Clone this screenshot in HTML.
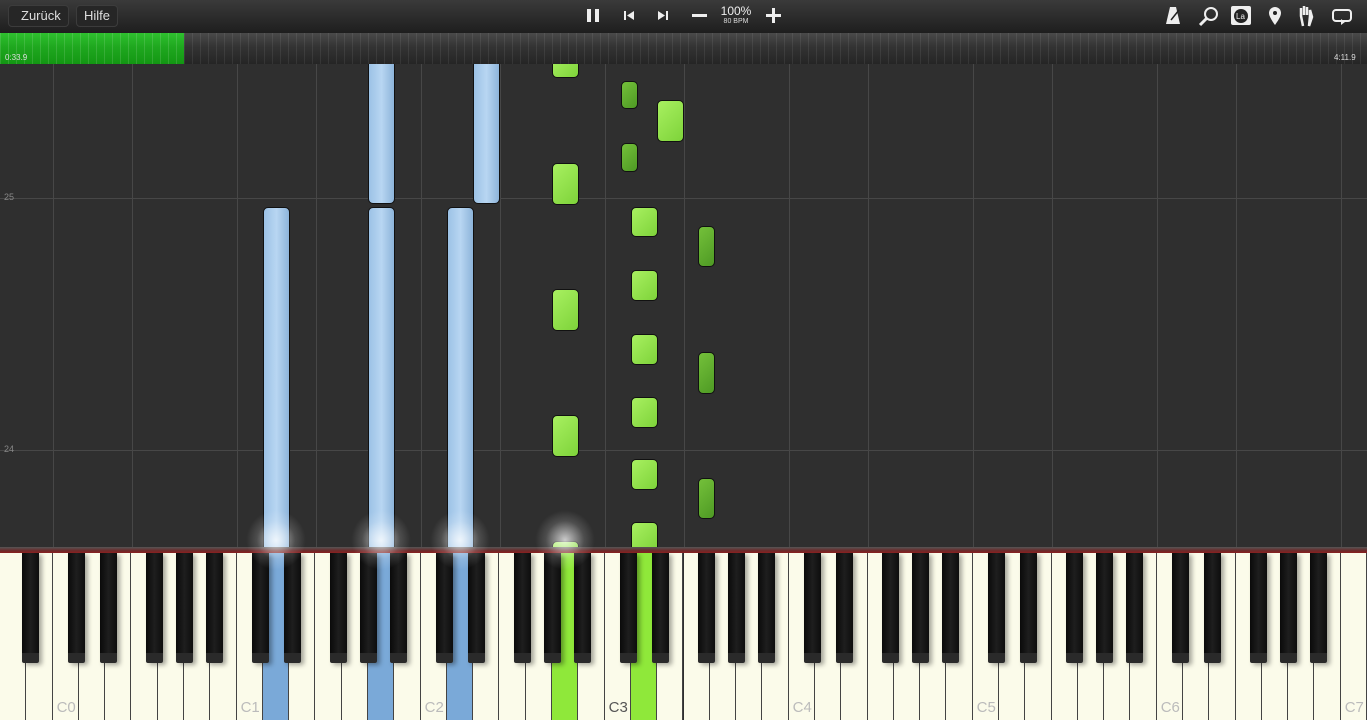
<!DOCTYPE html>
<html><head><meta charset="utf-8"><style>
*{margin:0;padding:0;box-sizing:border-box}
body{width:1367px;height:720px;overflow:hidden;background:#2f2f2f;font-family:"Liberation Sans",sans-serif;position:relative}
.top{position:absolute;left:0;top:0;width:1367px;height:33px;background:linear-gradient(#3a3a3a,#1e1e1e);}
.btn{position:absolute;top:5px;height:22px;border-radius:4px;background:#262626;border:1px solid #3c3c3c;color:#ddd;font-size:13px;line-height:20px;padding:0 7px}
.prog{position:absolute;left:0;top:33px;width:1367px;height:31px;
background-image:repeating-linear-gradient(90deg,rgba(255,255,255,.07) 0 1px,transparent 1px 8px),linear-gradient(#4a4a4a,#333 45%,#252525)}
.green{position:absolute;left:0;top:33px;width:184px;height:31px;background-image:repeating-linear-gradient(90deg,rgba(255,255,255,.12) 0 1px,transparent 1px 8px),linear-gradient(#2fc02f,#1fa81f 45%,#139613)}
.t{position:absolute;font-size:8px;color:#ddd;top:53px}
.roll{position:absolute;left:0;top:64px;width:1367px;height:487px;background:#2f2f2f;overflow:hidden}
.vl{position:absolute;top:0;width:1px;height:487px;background:#474747}
.hl{position:absolute;left:0;width:1367px;height:1px;background:#474747}
.lab{position:absolute;left:4px;font-size:9px;color:#888}
.n{position:absolute;border-radius:5px;border:1px solid #111}
.b{background:linear-gradient(90deg,#9cc2e6,#b8d6f2 50%,#8db4da)}
.g{background:linear-gradient(135deg,#a8f060,#7ed33a)}
.d{background:linear-gradient(135deg,#74c03a,#4e9a24)}
.red{position:absolute;left:0;top:547px;width:1367px;height:6px;background:linear-gradient(#555,#6b2a2a 60%,#8a2020)}
.w{position:absolute;top:553px;height:167px;background:#fbfbea;border-right:1px solid #444}
.k{position:absolute;top:553px;height:110px;width:17px;background:linear-gradient(90deg,#0a0a0a,#1e1e1e 50%,#0d0d0d);border-bottom:10px solid #2a2a2a;border-radius:0 0 2px 2px;box-shadow:3px 2px 5px rgba(0,0,0,.35)}
.cl{position:absolute;top:699px;font-size:15px;color:#bbb}
.glow{position:absolute;width:60px;height:60px;border-radius:50%;background:radial-gradient(rgba(255,255,255,.75),rgba(255,255,255,.15) 45%,transparent 70%)}
svg{position:absolute}
</style></head><body>
<div class="top"></div>
<div class="btn" style="left:8px;padding-left:12px">Zurück</div>
<div class="btn" style="left:76px">Hilfe</div>
<div style="position:absolute;left:587px;top:9px;width:4px;height:13px;background:#eee"></div>
<div style="position:absolute;left:595px;top:9px;width:4px;height:13px;background:#eee"></div>
<svg style="left:622px;top:9px" width="14" height="13"><rect x="2" y="2" width="2" height="9" fill="#eee"/><path d="M12 2L5 6.5L12 11Z" fill="#eee"/></svg>
<svg style="left:656px;top:9px" width="14" height="13"><path d="M2 2L9 6.5L2 11Z" fill="#eee"/><rect x="10" y="2" width="2" height="9" fill="#eee"/></svg>
<div style="position:absolute;left:692px;top:14px;width:15px;height:3px;background:#eee"></div>
<div style="position:absolute;left:718px;top:4px;width:36px;text-align:center;color:#eee;font-size:12px">100%</div>
<div style="position:absolute;left:718px;top:18px;width:36px;text-align:center;color:#ddd;font-size:7px">80 BPM</div>
<div style="position:absolute;left:766px;top:14px;width:15px;height:3px;background:#eee"></div>
<div style="position:absolute;left:772px;top:8px;width:3px;height:15px;background:#eee"></div>
<svg style="left:1160px;top:4px" width="207" height="26">
<path d="M10 3L16 3L20 20L6 20Z" fill="#eee"/><path d="M11 16L19 6" stroke="#222" stroke-width="1.5"/>
<circle cx="51" cy="10" r="6" fill="none" stroke="#eee" stroke-width="2"/><path d="M47 14L40 21" stroke="#eee" stroke-width="3"/>
<rect x="71" y="2" width="20" height="19" rx="2" fill="#eee"/><circle cx="81" cy="12" r="7" fill="#222"/><text x="76" y="15" font-size="8" fill="#eee" font-family="Liberation Sans">La</text>
<path d="M115 21C110 14 109 11 109 9a6 6 0 0 1 12 0c0 2-1 5-6 12Z" fill="#eee"/><circle cx="115" cy="9" r="2" fill="#222"/>
<path d="M143 22L141 12L141 4M144 11L144 2M147 11L147 3M150 12L150 6L152 13L149 22Z" stroke="#eee" stroke-width="2.5" fill="#eee"/>
<rect x="173" y="6" width="18" height="11" rx="3" fill="none" stroke="#eee" stroke-width="2"/><path d="M181 15L185 18L181 21Z" fill="#eee"/>
</svg>
<div class="prog"></div><div class="green"></div>
<div class="t" style="left:5px">0:33.9</div><div class="t" style="left:1334px">4:11.9</div>
<div class="roll" id="roll">
<div class="hl" style="top:134px"></div><div class="hl" style="top:386px"></div>
<div class="lab" style="top:128px">25</div><div class="lab" style="top:380px">24</div>
</div>
<div id="kb"></div>
<div class="red"></div>
<script>
var roll=document.getElementById('roll');
[53,132,237,316,421,500,605,684,789,868,973,1052,1157,1236,1341].forEach(function(x){var d=document.createElement('div');d.className='vl';d.style.left=x+'px';roll.insertBefore(d,roll.firstChild);});
var notes=[['b',263,143,27,345],['b',368,-10,27,150],['b',368,143,27,345],['b',447,143,27,345],['b',473,-10,27,150],
['g',552,-10,27,24],['g',552,99,27,42],['g',552,225,27,42],['g',552,351,27,42],['g',552,477,27,20],
['g',631,143,27,30],['g',631,206,27,31],['g',631,270,27,31],['g',631,333,27,31],['g',631,395,27,31],['g',631,458,27,30],
['g',657,36,27,42],['d',621,17,17,28],['d',621,79,17,29],['d',698,162,17,41],['d',698,288,17,42],['d',698,414,17,41]];
notes.forEach(function(n){var d=document.createElement('div');d.className='n '+n[0];d.style.left=n[1]+'px';d.style.top=n[2]+'px';d.style.width=n[3]+'px';d.style.height=n[4]+'px';roll.appendChild(d);});
var W=1367/52,h='';
var pressed={10:'#7aa9d8',14:'#7aa9d8',17:'#7aa9d8',21:'#8fe83a',24:'#8fe83a'};
for(var i=0;i<52;i++){var c=pressed[i]?'background:'+pressed[i]+';':'';h+='<div class="w" style="left:'+(i*W)+'px;width:'+W+'px;'+c+'"></div>';}
var letters='ABCDEFG';
for(var i=0;i<51;i++){var L=letters[i%7];if('ACDFG'.indexOf(L)>=0){var off={A:4.3,C:-2,D:3,F:-3,G:0.5}[L];h+='<div class="k" style="left:'+((i+1)*W-8.5+off)+'px"></div>';}}
for(var o=0;o<8;o++){var x=(2+o*7)*W+4;h+='<div class="cl" style="left:'+x+'px;'+(o==3?'color:#555':'')+'">C'+o+'</div>';}
document.getElementById('kb').innerHTML=h;
[[276,540],[381,540],[460,540],[565,540]].forEach(function(p){var g=document.createElement('div');g.className='glow';g.style.left=(p[0]-30)+'px';g.style.top=(p[1]-30)+'px';document.body.appendChild(g);});
</script>
</body></html>
